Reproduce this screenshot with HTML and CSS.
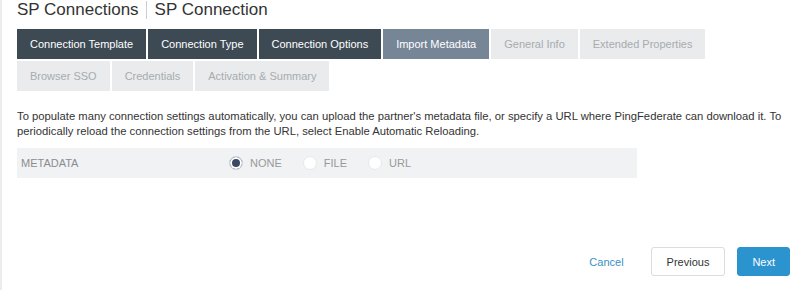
FILE: index.html
```html
<!DOCTYPE html>
<html>
<head>
    <title>SP Connection</title>
    <link rel="stylesheet" href="styles.css">
</head>
<body>
    <div class="page">
        <h1 class="title">
            <span>SP Connections</span>
            <span class="sep"></span>
            <span>SP Connection</span>
        </h1>

        <div class="tabs">
            <div class="tab done">Connection Template</div>
            <div class="tab done">Connection Type</div>
            <div class="tab done">Connection Options</div>
            <div class="tab active">Import Metadata</div>
            <div class="tab">General Info</div>
            <div class="tab">Extended Properties</div>
        </div>
        <div class="tabs">
            <div class="tab">Browser SSO</div>
            <div class="tab">Credentials</div>
            <div class="tab">Activation &amp; Summary</div>
        </div>

        <p class="intro">To populate many connection settings automatically, you can upload the partner's metadata file, or specify a URL where PingFederate can download it. To periodically reload the connection settings from the URL, select Enable Automatic Reloading.</p>

        <div class="field">
            <div class="label">Metadata</div>
            <div class="radios">
                <label class="radio"><span class="dot checked"></span>NONE</label>
                <label class="radio"><span class="dot"></span>FILE</label>
                <label class="radio"><span class="dot"></span>URL</label>
            </div>
        </div>

        <div class="actions">
            <a class="cancel" href="#">Cancel</a>
            <button class="btn">Previous</button>
            <button class="btn primary">Next</button>
        </div>
    </div>
</body>
</html>
```

FILE: styles.css
```css
body {
    margin: 0;
    font-family: "Liberation Sans", Arial, sans-serif;
    color: #333;
}
.page {
    border-left: 2px solid #ececec;
    min-height: 290px;
    box-sizing: border-box;
    padding: 0 10px 0 15px;
}
.title {
    display: flex;
    align-items: center;
    margin: 0 0 9px;
    height: 20px;
    font-size: 17px;
    font-weight: normal;
    color: #333;
}
.sep {
    width: 1px;
    height: 18px;
    background-color: #ccc;
    margin: 0 8px 0 7px;
}
.tabs {
    display: flex;
    gap: 2px;
    margin-bottom: 2px;
}
.tab {
    height: 30px;
    line-height: 30px;
    padding: 0 13px;
    font-size: 11px;
    background-color: #e9ebed;
    color: #a7abaf;
    white-space: nowrap;
}
.tab.done {
    background-color: #3d4a54;
    color: #fff;
}
.tab.active {
    background-color: #778697;
    color: #fff;
}
.intro {
    font-size: 11.25px;
    line-height: 15px;
    margin: 18px 0 9px;
    color: #333;
}
.field {
    display: flex;
    align-items: center;
    width: 620px;
    height: 30px;
    background-color: #f1f2f4;
}
.label {
    width: 208px;
    padding-left: 4px;
    font-size: 11px;
    text-transform: uppercase;
    color: #8a8d90;
}
.radios {
    display: flex;
    gap: 21px;
}
.radio {
    display: flex;
    align-items: center;
    gap: 7px;
    font-size: 11px;
    color: #999;
}
.dot {
    width: 14px;
    height: 14px;
    border-radius: 50%;
    box-sizing: border-box;
    border: 1px solid #e6e8eb;
    background-color: #fff;
}
.dot.checked {
    background-color: #3b4a63;
    box-shadow: inset 0 0 0 2px #fff;
    border-color: #d5d9de;
}
.actions {
    display: flex;
    justify-content: flex-end;
    align-items: center;
    margin-top: 69px;
}
.cancel {
    font-size: 11px;
    color: #3a8fc2;
    text-decoration: none;
    margin-right: 27px;
}
.btn {
    font-family: inherit;
    font-size: 11px;
    height: 29px;
    padding: 0 15px;
    border: 1px solid #dcdcdc;
    border-radius: 3px;
    background-color: #fff;
    color: #333;
    cursor: pointer;
}
.btn.primary {
    margin-left: 12px;
    padding: 0 14px;
    background-color: #2b94cf;
    border-color: #2b94cf;
    color: #fff;
}
```
